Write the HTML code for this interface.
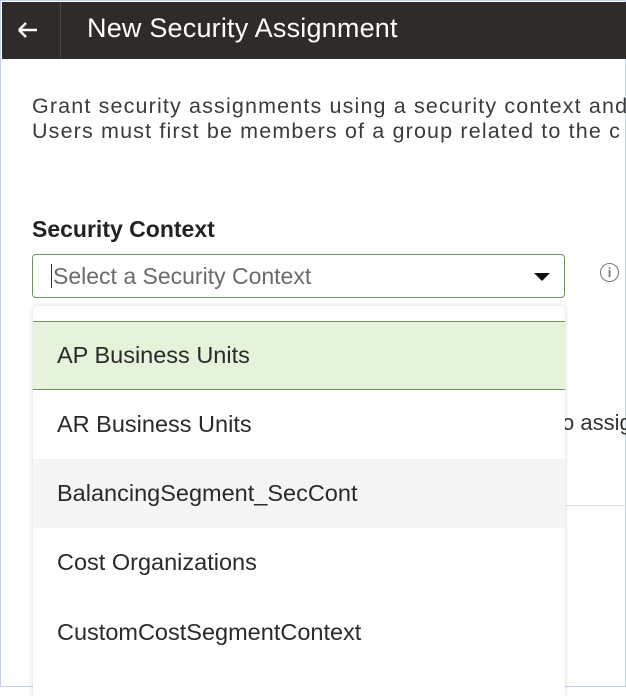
<!DOCTYPE html>
<html><head><style>
body{margin:0;width:626px;height:687px;overflow:hidden;background:#fff;font-family:"Liberation Sans",sans-serif;position:relative}
.frame{position:absolute;left:0;top:0;width:624px;height:685px;border:1px solid #c6d3e6}
.hdr{position:absolute;left:2px;top:2px;width:624px;height:57px;background:#2f2b28}
.div{position:absolute;left:58px;top:0;width:1px;height:57px;background:#4a4642}
.hdr .t{position:absolute;left:85px;top:11px;color:#fff;font-size:27px;letter-spacing:0.2px;white-space:nowrap}
.p{position:absolute;left:32px;top:94px;font-size:21.5px;line-height:25px;color:#3b3b3b;white-space:nowrap;letter-spacing:1.15px}
.lab{position:absolute;left:32px;top:216px;font-size:23px;font-weight:bold;color:#222;white-space:nowrap}
.inp{position:absolute;left:32px;top:254px;width:531px;height:42px;border:1px solid #6e9160;border-radius:4px}
.inp .ph{position:absolute;left:18px;top:9px;font-size:23px;color:#6b6b6b;border-left:1.5px solid #333;padding-left:1px;line-height:24px;white-space:nowrap}
.caret{position:absolute;right:14px;top:18px;width:0;height:0;border-left:8px solid transparent;border-right:8px solid transparent;border-top:8px solid #111}
.info{position:absolute;left:600px;top:263px;width:17px;height:17px;border:1.5px solid #777;border-radius:50%;font-size:13px;color:#777;text-align:center;line-height:17px;font-weight:bold}
.bg1{position:absolute;left:562px;top:410px;font-size:22px;color:#333;white-space:nowrap}
.ln{position:absolute;left:566px;top:505px;width:60px;height:1px;background:#ddd}
.dd{position:absolute;left:33px;top:306px;width:532px;height:390px;background:#fff;box-shadow:0 0 5px rgba(0,0,0,.18);border-radius:4px 4px 0 0}
.it{position:absolute;left:0;width:532px;height:69px;font-size:23.5px;color:#2a2a2a;line-height:69px;padding-left:24px;box-sizing:border-box;white-space:nowrap}
</style></head><body>
<div class="frame"></div>
<div class="bg1">o assig</div>
<div class="ln"></div>
<div class="hdr"><div class="div"></div>
<svg style="position:absolute;left:14px;top:18px" width="24" height="20" viewBox="0 0 24 20"><path d="M3 10H21M3 10L10 3M3 10L10 17" stroke="#fff" stroke-width="2.5" fill="none"/></svg>
<div class="t">New Security Assignment</div></div>
<div class="p">Grant security assignments using a security context and<br>Users must first be members of a group related to the c</div>
<div class="lab">Security Context</div>
<div class="inp"><div class="ph">Select a Security Context</div><div class="caret"></div></div>
<div class="info">i</div>
<div class="dd">
<div class="it" style="top:15px;background:#e4f3da;border-top:1.5px solid #6e9160;border-bottom:1.5px solid #6e9160;line-height:66px">AP Business Units</div>
<div class="it" style="top:84px">AR Business Units</div>
<div class="it" style="top:153px;background:#f5f5f5">BalancingSegment_SecCont</div>
<div class="it" style="top:222px">Cost Organizations</div>
<div class="it" style="top:292px">CustomCostSegmentContext</div>
</div>
</body></html>
